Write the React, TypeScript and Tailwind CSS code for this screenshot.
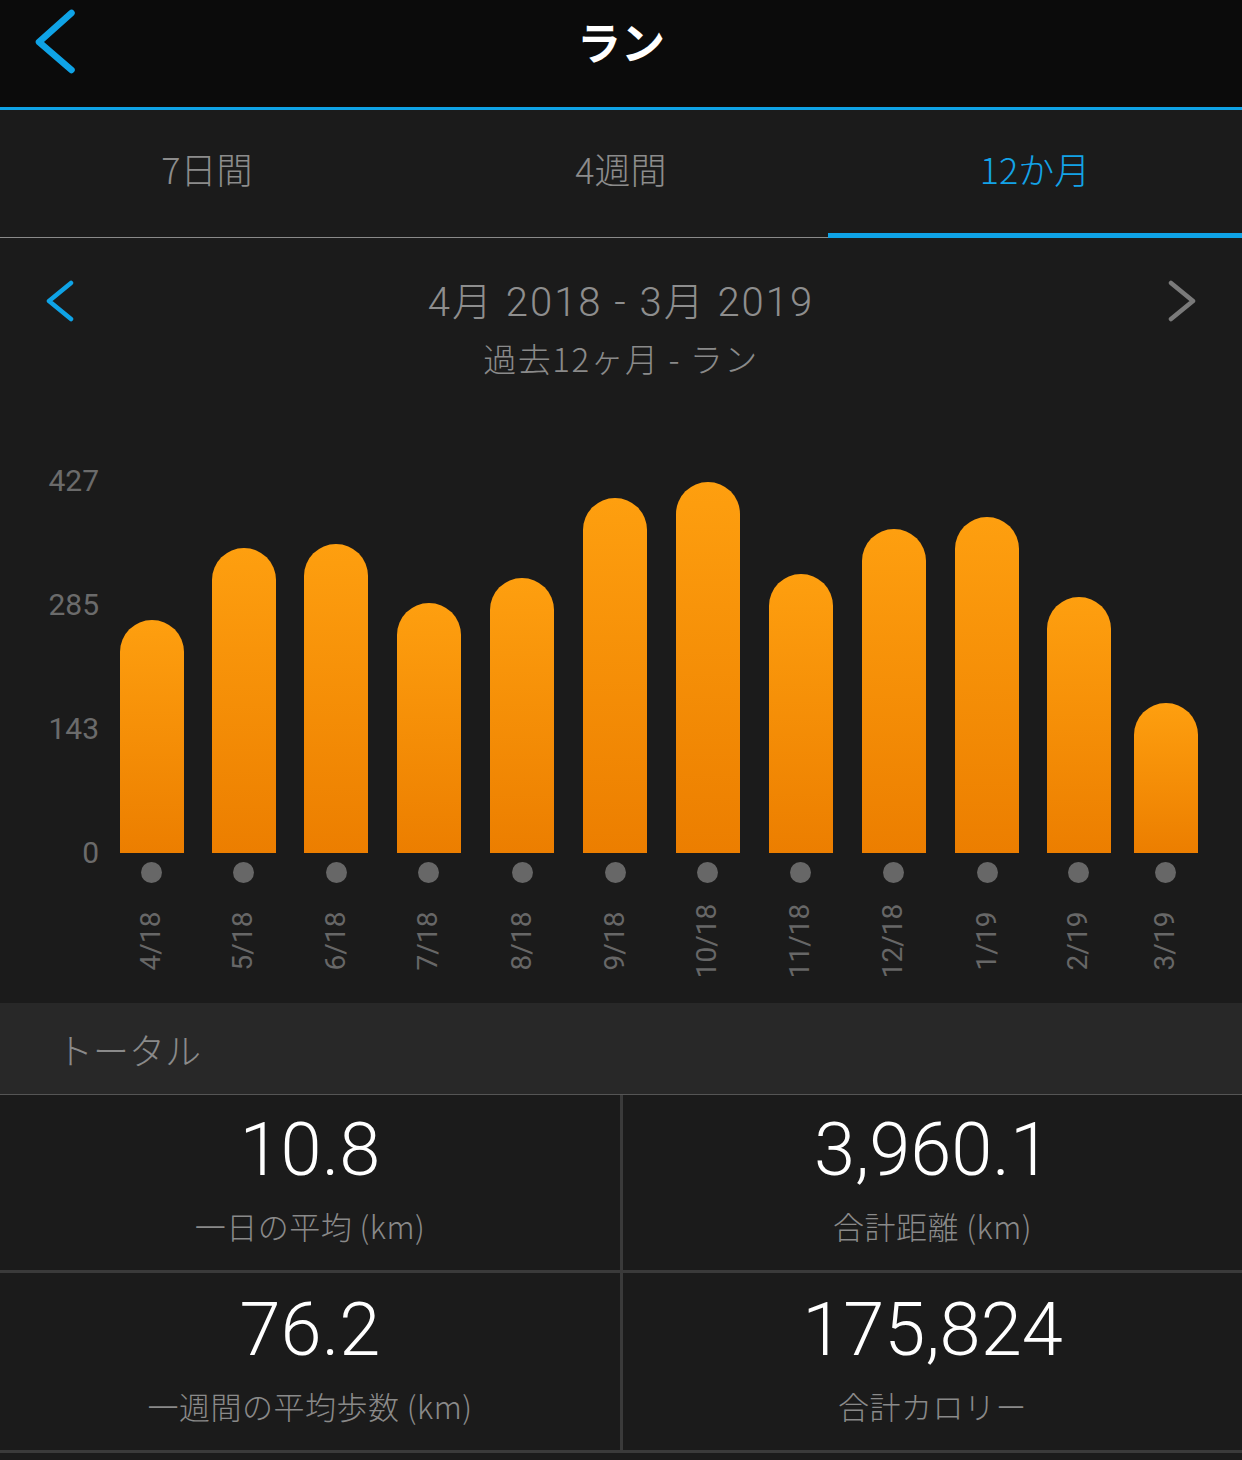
import React from "react";

const bars = [
  { label: "4/18", h: 233 },
  { label: "5/18", h: 305 },
  { label: "6/18", h: 309 },
  { label: "7/18", h: 250 },
  { label: "8/18", h: 275 },
  { label: "9/18", h: 355 },
  { label: "10/18", h: 371 },
  { label: "11/18", h: 279 },
  { label: "12/18", h: 324 },
  { label: "1/19", h: 336 },
  { label: "2/19", h: 256 },
  { label: "3/19", h: 150 },
];

const jp = { fontFamily: '"Noto Sans CJK JP", "Noto Sans", sans-serif' };
const num = { fontFamily: 'Roboto, "Noto Sans CJK JP", sans-serif' };

function Cell({ value, label, top, h, right }: { value: string; label: string; top: string; h: string; right?: boolean }) {
  return (
    <div
      className={`${h} ${top} flex flex-col items-center border-b-[3px] border-[#3a3a3a] ${right ? "" : "border-r-[3px]"}`}
    >
      <div className="text-[74px] leading-[80px] font-light text-white" style={num}>
        {value}
      </div>
      <div className="mt-[16px] text-[31px] leading-[40px] font-light tracking-[0.5px] text-[#8a8a8a]" style={jp}>
        {label}
      </div>
    </div>
  );
}

export default function App() {
  return (
    <div className="min-h-screen w-[1242px] bg-[#1b1b1b]" style={jp}>
      {/* Header */}
      <div className="h-[107px] bg-[#0b0b0b] grid grid-cols-[1fr_auto_1fr] items-start">
        <div className="pl-[30px] pt-[6px]">
          <svg width="50" height="72" viewBox="0 0 50 72" fill="none">
            <polyline points="41.5,7 9,36 41.5,64" stroke="#0fa3e6" strokeWidth="6.5" strokeLinecap="round" strokeLinejoin="round" />
          </svg>
        </div>
        <div className="pt-[11px] text-[44px] leading-[60px] font-bold text-white">ラン</div>
        <div />
      </div>
      <div className="h-[3px] bg-[#0fa3e6]" />

      {/* Tabs */}
      <div className="grid grid-cols-3 bg-[#1b1b1b]">
        <div className="h-[128px] flex items-center justify-center border-b border-[#8a8a8a] pb-[12px] text-[36px] text-[#8c8c8c] font-light">
          7日間
        </div>
        <div className="h-[128px] flex items-center justify-center border-b border-[#8a8a8a] pb-[12px] text-[36px] text-[#8c8c8c] font-light">
          4週間
        </div>
        <div className="h-[128px] flex items-center justify-center border-b-[5px] border-[#0fa3e6] pb-[8px] text-[36px] text-[#13a3e8] font-light">
          12か月
        </div>
      </div>

      {/* Chart section */}
      <div className="bg-[#1b1b1b] pb-[4px]">
        <div className="pt-[37px]">
          <div className="grid grid-cols-[120px_1fr_120px] h-[48px] items-center">
            <div className="pl-[45px] flex items-center">
              <svg width="32" height="42" viewBox="0 0 32 42" fill="none">
                <polyline points="26,3 4,21 26,39" stroke="#0fa3e6" strokeWidth="4.5" strokeLinecap="round" strokeLinejoin="round" />
              </svg>
            </div>
            <div className="text-center text-[40px] leading-[48px] font-light tracking-[2px] text-[#8e8e8e]" style={num}>
              4<span style={jp}>月</span> 2018 - 3<span style={jp}>月</span> 2019
            </div>
            <div className="pr-[45px] flex items-center justify-end">
              <svg width="32" height="42" viewBox="0 0 32 42" fill="none">
                <polyline points="6,3 28,21 6,39" stroke="#7a7a7a" strokeWidth="4.5" strokeLinecap="round" strokeLinejoin="round" />
              </svg>
            </div>
          </div>
          <div className="mt-[15px] text-center text-[33px] leading-[40px] font-light tracking-[1.5px] text-[#8a8a8a]">過去12ヶ月 - ラン</div>
        </div>

        <div className="mt-[62px] flex">
          <div className="w-[106px] pt-[27px] pr-[7px]">
            <div className="h-[400px] flex flex-col justify-between items-end text-[30px] leading-[28px] text-[#6b6b6b]" style={num}>
              <span>427</span>
              <span>285</span>
              <span>143</span>
              <span>0</span>
            </div>
          </div>
          <div className="grid grid-cols-[91px_93px_92px_93px_94px_92px_93px_93px_93px_94px_89px_85px]">
            {bars.map((b) => (
              <div key={b.label} className="flex flex-col items-center">
                <div className="h-[413px] w-full flex items-end justify-center">
                  <div
                    className="w-16 rounded-t-[32px] bg-linear-to-b from-[#fe9f0f] to-[#ec7e00]"
                    style={{ height: b.h }}
                  />
                </div>
                <div className="mt-[9px] w-[21px] h-[21px] rounded-full bg-[#676767]" />
                <div className="h-[116px] w-full flex items-center justify-center">
                  <span className="-rotate-90 whitespace-nowrap text-[28px] leading-none text-[#676767]" style={num}>
                    {b.label}
                  </span>
                </div>
              </div>
            ))}
          </div>
        </div>
      </div>

      {/* Totals header */}
      <div className="h-[92px] bg-[#282828] border-b border-[#555555] flex items-center pl-[57px] text-[36px] font-light text-[#8a8a8a]">
        トータル
      </div>

      {/* Stats grid */}
      <div className="grid grid-cols-[623px_619px]">
        <Cell value="10.8" label="一日の平均 (km)" top="pt-[15px]" h="h-[178px]" />
        <Cell value="3,960.1" label="合計距離 (km)" top="pt-[15px]" h="h-[178px]" right />
        <Cell value="76.2" label="一週間の平均歩数 (km)" top="pt-[17px]" h="h-[180px]" />
        <Cell value="175,824" label="合計カロリー" top="pt-[17px]" h="h-[180px]" right />
      </div>
    </div>
  );
}
